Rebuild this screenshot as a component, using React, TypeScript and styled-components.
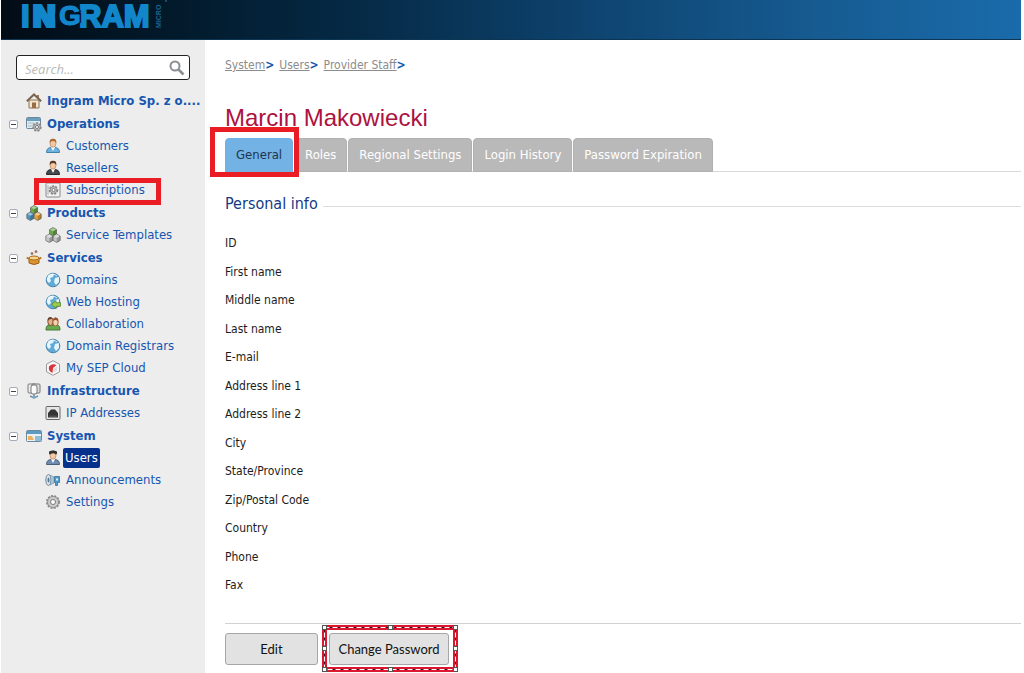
import React from "react";
import styled, { createGlobalStyle, css } from "styled-components";

const ui = `"DejaVu Sans Condensed", "DejaVu Sans", sans-serif`;

const GlobalStyle = createGlobalStyle`
  *, *::before, *::after { box-sizing: border-box; }
  body { margin: 0; background: #fff; font-family: ${ui}; font-size: 13px; color: #222; }
  ul, dl, dd, h1, h2 { margin: 0; padding: 0; }
  ul { list-style: none; }
`;

const Page = styled.div`
  min-height: 100vh;
  display: flex;
  flex-direction: column;
  padding: 0 3px 0 1px;
`;

const Header = styled.header`
  height: 40px;
  padding-left: 20px;
  background: linear-gradient(90deg, #020c16 0%, #021a2b 17%, #062c49 37%, #0e4470 58%, #165b91 80%, #1a6bab 100%);
  border-bottom: 1px solid #0d3554;
`;

const Body = styled.div`
  flex: 1;
  display: flex;
`;

const Sidebar = styled.nav`
  flex: 0 0 204px;
  min-width: 0;
  background: #ededed;
  padding: 15px 0 0;
`;

const SearchBox = styled.label`
  display: flex;
  align-items: center;
  height: 25px;
  margin: 0 15px 10px;
  padding: 0 4px 0 8px;
  background: #fff;
  border: 1px solid #222;
  border-radius: 3px;
`;

const SearchInput = styled.input`
  flex: 1;
  min-width: 0;
  padding: 2px 0 0;
  border: 0;
  outline: 0;
  background: transparent;
  font: italic 13px "Open Sans", sans-serif;
  &::placeholder { color: #b9b9b9; opacity: 1; }
`;

const Group = styled.ul`
  margin-bottom: 1px;
`;

const Row = styled.li<{ $child?: boolean }>`
  position: relative;
  display: flex;
  align-items: center;
  height: 22px;
  padding-left: ${(p) => (p.$child ? 44 : 8)}px;
`;

const Toggle = styled.button`
  width: 9px;
  height: 9px;
  flex: none;
  margin-right: 8px;
  padding: 0;
  border: 1px solid #a3adb8;
  border-radius: 2px;
  background: linear-gradient(#444, #444) center / 5px 1px no-repeat #fff;
`;

const ToggleGap = styled.span`
  flex: none;
  width: 9px;
  margin-right: 8px;
`;

const Icon = styled.svg`
  flex: none;
  width: 16px;
  height: 16px;
`;

const NavLink = styled.a<{ $bold?: boolean; $active?: boolean }>`
  margin-left: 2px;
  padding: 0 3px;
  line-height: 20px;
  font-size: 13px;
  font-weight: ${(p) => (p.$bold ? 700 : 400)};
  color: #1656b0;
  text-decoration: none;
  white-space: nowrap;
  ${(p) =>
    p.$active &&
    css`
      background: #05308c;
      color: #fff;
      border-radius: 2px;
      padding: 0 2px;
    `}
`;

const Callout = styled.span<{ $inset: string }>`
  position: absolute;
  z-index: 2;
  inset: ${(p) => p.$inset};
  border: 5px solid #ea1c24;
  pointer-events: none;
`;

const Main = styled.main`
  flex: 1;
  min-width: 0;
  padding: 16px 0 0 20px;
`;

const Breadcrumbs = styled.div`
  display: flex;
  gap: 5px;
  line-height: 18px;
  font-size: 12px;
  span { color: #1656b0; font-weight: 700; }
`;

const Crumb = styled.a`
  color: #8c8c8c;
  text-decoration: underline;
`;

const Title = styled.h1`
  margin-top: 30px;
  font: 24px/28px "Liberation Sans", Arial, sans-serif;
  color: #ad1240;
`;

const Tabs = styled.div`
  display: flex;
  gap: 1px;
  margin-top: 6px;
  border-bottom: 1px solid #d8d8d8;
`;

const TabCell = styled.div`
  position: relative;
  display: flex;
`;

const Tab = styled.button<{ $active?: boolean }>`
  height: 34px;
  margin-bottom: -1px;
  padding: 0 10px 2px;
  border: 1px solid ${(p) => (p.$active ? "#73b2e4" : "#b1b1b1")};
  border-radius: 4px 4px 0 0;
  background: ${(p) => (p.$active ? "#73b2e4" : "#b9b9b9")};
  color: ${(p) => (p.$active ? "#1d3550" : "#fff")};
  font: 13px ${ui};
  white-space: nowrap;
`;

const SectionTitle = styled.h2`
  display: flex;
  align-items: center;
  gap: 5px;
  margin-top: 22px;
  font-size: 16px;
  line-height: 20px;
  font-weight: 400;
  color: #143a85;
  &::after { content: ""; flex: 1; height: 1px; margin-top: 4px; background: #dcdcdc; }
`;

const Fields = styled.dl`
  margin-top: 15px;
`;

const Field = styled.div`
  display: flex;
  font-size: 12px;
  line-height: 28px;
  color: #1c1c1c;
  &:nth-child(odd) { line-height: 29px; }
`;

const Actions = styled.div`
  display: flex;
  gap: 11px;
  margin-top: 23px;
  padding-top: 9px;
  border-top: 1px solid #d2d2d2;
`;

const ActionCell = styled.div`
  position: relative;
  display: flex;
`;

const ActionButton = styled.button<{ $width: number }>`
  width: ${(p) => p.$width}px;
  height: 32px;
  padding: 0;
  border: 1px solid #a6a6a6;
  border-radius: 3px;
  background: #e2e2e2;
  color: #111;
  font: 13px Lato, sans-serif;
`;

const Selection = styled.svg`
  position: absolute;
  left: -7px;
  top: -8px;
  width: 136px;
  height: 47px;
  pointer-events: none;
`;

function Logo() {
  return (
    <svg width="150" height="38" viewBox="0 0 150 38" role="img" aria-label="Ingram Micro">
      <g fill="#1186cb" stroke="#1186cb" strokeWidth="2" fontFamily="Liberation Sans, Arial, sans-serif" fontWeight="700" fontSize="31">
        <text x="0" y="27">I</text>
        <text x="11" y="27">N</text>
        <text x="13" y="27">N</text>
        <text x="58" y="27">RAM</text>
      </g>
      <circle cx="45" cy="16" r="11" fill="#03131f" />
      <text x="38" y="25" fill="#1186cb" stroke="#03131f" strokeWidth="4" paintOrder="stroke" fontFamily="Liberation Sans, Arial, sans-serif" fontWeight="700" fontSize="28">G</text>
      <text x="38" y="25" fill="#1186cb" stroke="#1186cb" strokeWidth="1" fontFamily="Liberation Sans, Arial, sans-serif" fontWeight="700" fontSize="28">G</text>
      <text transform="translate(140 28) rotate(-90)" fill="#1a6593" fontFamily="Liberation Sans, Arial, sans-serif" fontWeight="700" fontSize="7">MICRO</text>
      <circle cx="145" cy="1" r="1" fill="#31576f" />
    </svg>
  );
}

const Globe = () => (
  <>
    <circle cx="8" cy="8" r="6.8" fill="#62aad5" stroke="#4385ad" />
    <path d="M3 4q3-3 6-2l-1 3-3 1 1 3-2 2Q0 8 3 4Zm7 2 4-1v5l-3 3-2-3Z" fill="#e4f6fc" />
    <path d="M3 4q5-4 9 0" fill="none" stroke="#fff" strokeOpacity=".7" />
  </>
);

const Person = ({ shirt, hair, stroke }: { shirt: string; hair: string; stroke: string }) => (
  <>
    <path d="M1.5 14.5q0-5 5-5h3q5 0 5 5Z" fill={shirt} stroke={stroke} />
    <path d="m6 9 2 4 2-4Z" fill="#fff" />
    <ellipse cx="8" cy="5.2" rx="3" ry="4" fill="#f4c9a1" stroke="#a77951" strokeWidth=".6" />
    <path d="M4.8 5Q4 .7 8 .7T11.2 5Q10 2.8 8 3T4.8 5Z" fill={hair} />
  </>
);

const Gear = ({ x, y, r }: { x: number; y: number; r: number }) => (
  <>
    <circle cx={x} cy={y} r={r} fill="#ccc" stroke="#888" strokeWidth="2" strokeDasharray="2 1.2" />
    <circle cx={x} cy={y} r={r - 0.5} fill="#ccc" stroke="#888" strokeWidth=".8" />
    <circle cx={x} cy={y} r={r / 2.4} fill="#fff" stroke="#777" />
  </>
);

const Cubes = ({ a, b, c }: { a: string; b: string; c: string }) => (
  <>
    {[[4.5, 0.5, a], [0.8, 7, b], [8.2, 7, c]].map(([x, y, f]) => (
      <g key={`${x}`} transform={`translate(${x} ${y})`}>
        <path d="M0 2 3.5 0 7 2v4.5L3.5 8.5 0 6.5Z" fill={f as string} stroke="#555" strokeWidth=".6" />
        <path d="M.5 2.1 3.5.6l3 1.5-3 1.7Z" fill="#fff" fillOpacity=".45" />
        <path d="M3.5 4v4.4L7 6.4V2Z" fill="#000" fillOpacity=".22" />
      </g>
    ))}
  </>
);

const glyphs: Record<string, React.ReactNode> = {
  home: (
    <>
      <path d="M3 7h10v8H3Z" fill="#f2e6d0" stroke="#8f7357" />
      <path d="M11 2h2v4h-2Z" fill="#a57850" />
      <path d="M.8 8.3 8 1.5l7.2 6.8" fill="none" stroke="#7c6550" strokeWidth="2" />
      <path d="M6 9.5h4V15H6Z" fill="#9b6c42" />
    </>
  ),
  operations: (
    <>
      <rect x=".5" y="1.5" width="14" height="11" rx="1" fill="#dceaf1" stroke="#6d8799" />
      <path d="M1 2h13v3H1Z" fill="#6a9fbf" />
      <path d="M2 7h6M2 10h5" stroke="#a7bbc6" />
      <Gear x={11} y={11} r={3.7} />
    </>
  ),
  customer: <Person shirt="#6db1df" hair="#a86c37" stroke="#4582ab" />,
  reseller: <Person shirt="#44474c" hair="#5b3926" stroke="#292b2e" />,
  subscription: (
    <>
      <rect x="1" y="1" width="14" height="14" rx="1" fill="#f3f3f3" stroke="#888" />
      <path d="M3 3v10" stroke="#aaa" />
      <Gear x={8.5} y={8} r={3.8} />
    </>
  ),
  products: <Cubes a="#6aa84a" b="#4c96c5" c="#e5a33c" />,
  templates: <Cubes a="#6aa84a" b="#c5c5c5" c="#c5c5c5" />,
  services: (
    <>
      <path d="M3 8h10v5q-5 3-10 0Z" fill="#dc9332" stroke="#996019" />
      <ellipse cx="8" cy="8" rx="5" ry="2" fill="#f7d38a" stroke="#a66a20" />
      <path d="M3 9 .8 7.5M13 9l2.2-1.5" stroke="#b47222" strokeWidth="2" />
      <circle cx="6" cy="3.5" r="1.3" fill="#8d6c56" />
      <circle cx="10" cy="1.7" r="1.4" fill="#a5705c" />
    </>
  ),
  globe: <Globe />,
  hosting: (
    <>
      <Globe />
      <path d="m6.5 10.5 4.5-4v2.2h4.5v3.6H11v2.2Z" fill="#9ccc45" stroke="#4d842d" strokeWidth=".8" />
    </>
  ),
  collaboration: (
    <>
      <path d="M1 14q0-5 3-5h8q3 0 3 5Z" fill="#69a94d" stroke="#467b36" />
      <ellipse cx="5.5" cy="5.5" rx="2.7" ry="4" fill="#e5b087" stroke="#795035" />
      <path d="M2.7 5q-.5-4 3-4l2 2Q4 2.5 2.7 5Z" fill="#674330" />
      <ellipse cx="10.5" cy="6" rx="2.7" ry="4" fill="#f6d0aa" stroke="#a1653e" />
      <path d="M8 5q0-4 3-3.5t2 4Q11 3 8 5Z" fill="#99512f" />
    </>
  ),
  cloud: (
    <>
      <path d="m8 .7 6.5 3.5v7.6L8 15.3 1.5 11.8V4.2Z" fill="#f7f7f7" stroke="#999" />
      <path d="M4 6.5Q7 3 11.5 5L8 8l-.5 5Q3 11 4 6.5Z" fill="#d7353b" />
      <path d="m8.5 8.5 3.5-2v4l-3.5 2Z" fill="#ddd" />
    </>
  ),
  infrastructure: (
    <>
      <rect x="2" y="1" width="8" height="9" rx="1" fill="#ececec" stroke="#7b7b7b" />
      <rect x="6" y="1" width="8" height="9" rx="1" fill="#ddd" stroke="#777" />
      <rect x="5" y="2" width="6" height="9" rx="2" fill="#fafafa" stroke="#777" />
      <path d="M8 11v3M4 13l4 2 4-2" fill="none" stroke="#7b8f9e" strokeWidth="1.5" />
      <path d="m6 14 2-2 2 2-2 2Z" fill="#72a9cd" />
    </>
  ),
  ip: (
    <>
      <rect x="1" y="1.5" width="14" height="13" rx="1" fill="#e6e6e6" stroke="#666" />
      <path d="M3 12.500V8l3-3.500h4L13 8v4.500Z" fill="#343434" />
      <path d="M5 12.500v-2M7 12.500v-2M9 12.500v-2M11 12.500v-2" stroke="#999" strokeWidth=".6" />
    </>
  ),
  system: (
    <>
      <rect x=".5" y="2.5" width="15" height="11" rx="1" fill="#eaf1f4" stroke="#6c899d" />
      <path d="M1 3h14v3H1Z" fill="#5c9cc4" />
      <path d="M2 8h4l2 4H2Z" fill="#f0b05f" />
      <path d="M9 8h6v5H9Z" fill="#8fbcd8" />
    </>
  ),
  user: (
    <>
      <Person shirt="#6f8bae" hair="#333" stroke="#48607e" />
      <path d="M4 4V1.5Q8-.5 12 1.5V4Q8 2.5 4 4Z" fill="#333" />
    </>
  ),
  announcement: (
    <>
      <ellipse cx="3.5" cy="8" rx="2.7" ry="5.5" fill="#d7e6ef" stroke="#71899a" />
      <ellipse cx="3.5" cy="8" rx="1" ry="2.5" fill="#55788f" />
      <path d="m5 3 4 2v6l-4 2q2-5 0-10Z" fill="#a9c9dc" stroke="#71899a" strokeWidth=".6" />
      <path d="M9.5 4.5h5v6h-2v3h-2v-3h-1Z" fill="#4c9bd0" stroke="#3c6f93" strokeWidth=".8" />
      <path d="M11 6.5h2v2h-2Z" fill="#d9edf7" />
    </>
  ),
  gear: <Gear x={8} y={8} r={6} />,
};

type Item = { icon: string; text: string; active?: boolean; marked?: boolean };

const groups: { icon: string; text: string; fixed?: boolean; items: Item[] }[] = [
  { icon: "home", text: "Ingram Micro Sp. z o....", fixed: true, items: [] },
  {
    icon: "operations",
    text: "Operations",
    items: [
      { icon: "customer", text: "Customers" },
      { icon: "reseller", text: "Resellers" },
      { icon: "subscription", text: "Subscriptions", marked: true },
    ],
  },
  { icon: "products", text: "Products", items: [{ icon: "templates", text: "Service Templates" }] },
  {
    icon: "services",
    text: "Services",
    items: [
      { icon: "globe", text: "Domains" },
      { icon: "hosting", text: "Web Hosting" },
      { icon: "collaboration", text: "Collaboration" },
      { icon: "globe", text: "Domain Registrars" },
      { icon: "cloud", text: "My SEP Cloud" },
    ],
  },
  { icon: "infrastructure", text: "Infrastructure", items: [{ icon: "ip", text: "IP Addresses" }] },
  {
    icon: "system",
    text: "System",
    items: [
      { icon: "user", text: "Users", active: true },
      { icon: "announcement", text: "Announcements" },
      { icon: "gear", text: "Settings" },
    ],
  },
];

const tabs = ["General", "Roles", "Regional Settings", "Login History", "Password Expiration"];

const fields = [
  "ID", "First name", "Middle name", "Last name", "E-mail", "Address line 1", "Address line 2",
  "City", "State/Province", "Zip/Postal Code", "Country", "Phone", "Fax",
];

const handles = [
  [0, 0], [66, 0], [131, 0], [0, 21], [131, 21], [0, 42], [66, 42], [131, 42],
];

export default function App() {
  return (
    <Page>
      <GlobalStyle />
      <Header>
        <Logo />
      </Header>
      <Body>
        <Sidebar>
          <SearchBox>
            <SearchInput type="text" placeholder="Search..." aria-label="Search" />
            <Icon viewBox="0 0 16 16">
              <circle cx="6" cy="6" r="4.5" fill="none" stroke="#8b8f93" strokeWidth="2" />
              <path d="m9.5 9.5 5 5" stroke="#8b8f93" strokeWidth="2.6" />
            </Icon>
          </SearchBox>
          {groups.map((g) => (
            <Group key={g.text}>
              <Row>
                {g.fixed ? <ToggleGap /> : <Toggle aria-label={`Collapse ${g.text}`} />}
                <Icon viewBox="0 0 16 16">{glyphs[g.icon]}</Icon>
                <NavLink href="#" $bold>{g.text}</NavLink>
              </Row>
              {g.items.map((it) => (
                <Row key={it.text} $child>
                  <Icon viewBox="0 0 16 16">{glyphs[it.icon]}</Icon>
                  <NavLink href="#" $active={it.active}>{it.text}</NavLink>
                  {it.marked && <Callout $inset="-1px 44px -4px 33px" />}
                </Row>
              ))}
            </Group>
          ))}
        </Sidebar>
        <Main>
          <Breadcrumbs>
            {["System", "Users", "Provider Staff"].map((c) => (
              <div key={c}>
                <Crumb href="#">{c}</Crumb>
                <span>&gt;</span>
              </div>
            ))}
          </Breadcrumbs>
          <Title>Marcin Makowiecki</Title>
          <Tabs role="tablist">
            {tabs.map((t, i) => (
              <TabCell key={t}>
                <Tab role="tab" aria-selected={i === 0} $active={i === 0}>{t}</Tab>
                {i === 0 && <Callout $inset="-11px -6px -6px -15px" />}
              </TabCell>
            ))}
          </Tabs>
          <SectionTitle>Personal info</SectionTitle>
          <Fields>
            {fields.map((f) => (
              <Field key={f}>
                <dt>{f}</dt>
                <dd />
              </Field>
            ))}
          </Fields>
          <Actions>
            <ActionButton $width={93}>Edit</ActionButton>
            <ActionCell>
              <ActionButton $width={120}>Change Password</ActionButton>
              <Selection viewBox="0 0 136 47">
                <rect x="2.5" y="2.5" width="131" height="42" fill="none" stroke="#dc1730" strokeWidth="5" />
                <rect x="2.5" y="2.5" width="131" height="42" fill="none" stroke="#4d0a18" strokeWidth="1" />
                <rect x="2.5" y="2.5" width="131" height="42" fill="none" stroke="#fff" strokeWidth="1" strokeDasharray="5 3" />
                {handles.map(([x, y]) => (
                  <rect key={`${x}-${y}`} x={x + 0.5} y={y + 0.5} width="4" height="4" fill="#fff" stroke="#555" />
                ))}
              </Selection>
            </ActionCell>
          </Actions>
        </Main>
      </Body>
    </Page>
  );
}
